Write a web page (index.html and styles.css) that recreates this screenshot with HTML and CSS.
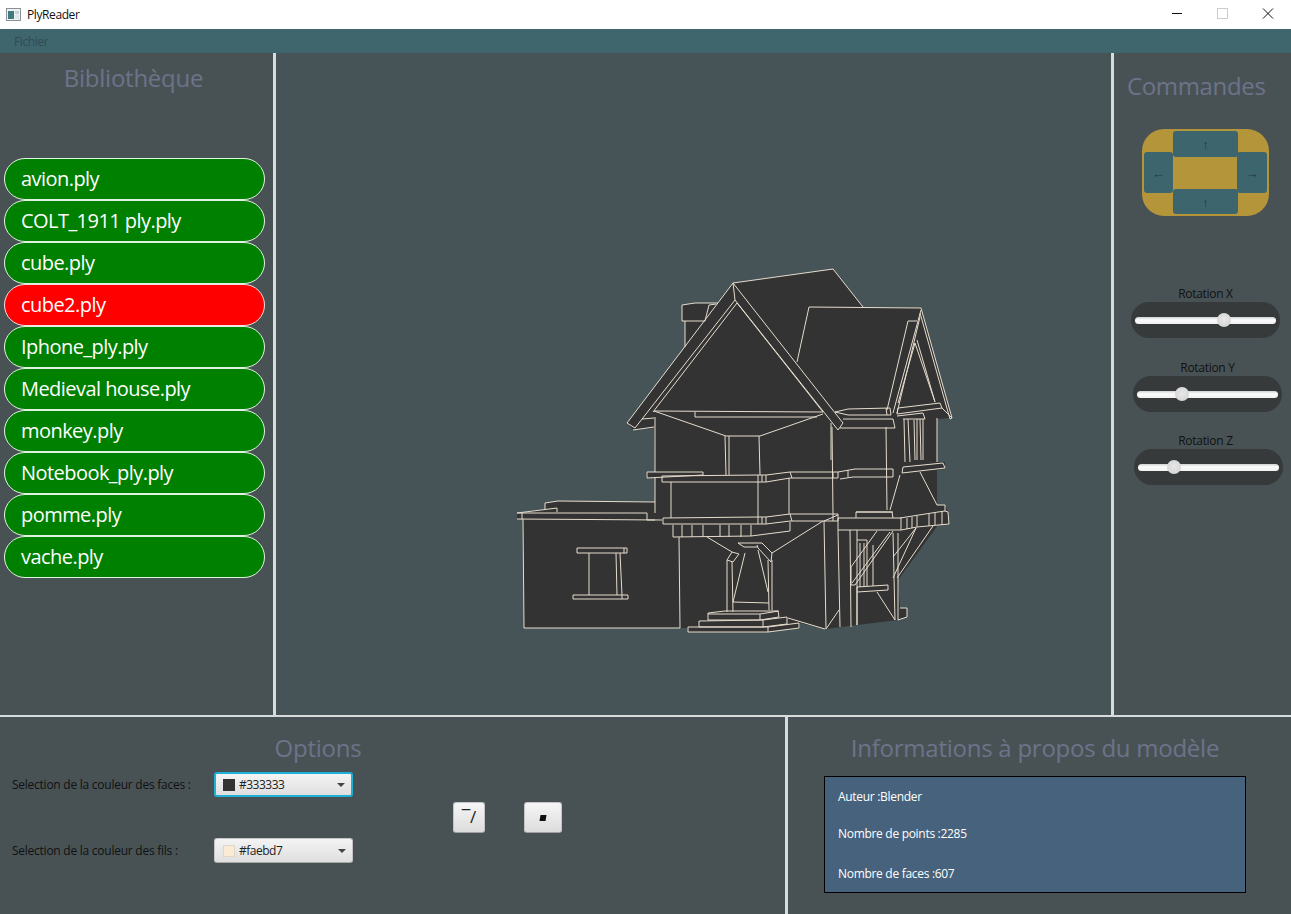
FILE: index.html
```html
<!DOCTYPE html>
<html lang="fr">
<head>
<meta charset="utf-8">
<title>PlyReader</title>
<link rel="stylesheet" href="styles.css">
</head>
<body>
<div class="app">
  <header class="titlebar">
    <svg class="app-icon" width="16" height="14" viewBox="0 0 16 14"><rect x="0.5" y="0.5" width="14" height="12" fill="#eef1f2" stroke="#8b9296"/><rect x="2" y="3" width="6" height="8" fill="#3f7a7e"/><rect x="9" y="3" width="4" height="3" fill="#c9d2d6"/><rect x="9" y="7" width="4" height="4" fill="#dfe5e7"/></svg>
    <span class="app-name">PlyReader</span>
    <div class="win-controls">
      <svg class="win-icon" width="46" height="29" viewBox="0 0 46 29"><path d="M19 13.500h10" stroke="#111" fill="none"/></svg>
      <svg class="win-icon" width="46" height="29" viewBox="0 0 46 29"><rect x="18.500" y="8.500" width="10" height="10" stroke="#ccc" fill="none"/></svg>
      <svg class="win-icon" width="46" height="29" viewBox="0 0 46 29"><path d="M18 8.500l10 10M28 8.500l-10 10" stroke="#111" fill="none"/></svg>
    </div>
  </header>
  <nav class="menubar"><span class="menu-item">Fichier</span></nav>

  <main class="top-row">
    <section class="library">
      <h2 class="panel-title library-title">Bibliothèque</h2>
      <ul class="file-list">
        <li class="file">avion.ply</li>
        <li class="file">COLT_1911 ply.ply</li>
        <li class="file">cube.ply</li>
        <li class="file file-active">cube2.ply</li>
        <li class="file">Iphone_ply.ply</li>
        <li class="file">Medieval house.ply</li>
        <li class="file">monkey.ply</li>
        <li class="file">Notebook_ply.ply</li>
        <li class="file">pomme.ply</li>
        <li class="file">vache.ply</li>
      </ul>
    </section>

    <section class="viewport">
      <svg class="model" width="835" height="662" viewBox="276 53 835 662">
        <path class="mesh-fill" d="M733 283L833 269L863 307L921 308L952 418L937 419L937 462L945 462L945 469L937 470L937 505L945 505L948 512L949 524L938 525L898 580L900 608L907 608L907 617L898 620L857 625L826 629L800 623L800 628L768 632L688 632L687 628L524 628L523 519L517 519L517 513L545 509L545 503L558 501L655 502L655 478L646 478L646 472L655 472L654 428L633 430L627 423L685 347L685 321L682 321L682 305L695 303L718 303Z"/>
        <path class="mesh-line" d="M733 283L833 269L863 307M809 307L921 308L952 418L950 419L920 313M809 307L797 362
        M627 423L733 283L843 423L838 430L735 300L635 428L627 423M733 283L735 300M653 412L737 303L823 412
        M685 347L685 321M682 305L682 321L705 321L709 305M682 305L695 303L718 303M709 305L716 304
        M654 411L823 412M695 412L695 417L817 417M654 411L726 436L760 436L823 414M633 430L654 427M642 419L654 418
        M725 436L726 475M729 436L729 475M759 436L760 475
        M662 476L758 475L766 475L766 482L662 482ZM758 475L758 482M762 475L762 482
        M766 475L790 472L832 472L838 472L838 478L792 478L790 472M766 482L790 478L792 478M833 472L833 478
        M838 472L855 469L893 469L893 477L853 477L840 479
        M647 472L703 472L703 475L647 478ZM655 417L655 472M655 478L655 513
        M671 482L671 518M758 482L758 517M789 478L789 514M832 427L833 514
        M663 518L758 517L766 517L766 524L663 524ZM758 517L758 524M762 517L762 524
        M766 517L790 514L838 514L838 521L792 521L790 514M766 524L790 521L792 521M833 514L833 521
        M790 522L790 531L751 536L673 537L673 525M682 525L682 537M692 525L692 537M703 525L703 537M720 525L720 537M729 525L729 537M741 525L741 537M751 525L751 536
        M679 537L680 628M707 537L732 552M823 521L772 553
        M738 543L762 543L772 553L771 562L758 548L757 545M738 543L744 547L757 547M727 560L732 552L739 554L733 562L727 560
        M727 560L727 612M732 562L733 612M768 560L769 610M772 560L772 610M745 553L733 602M758 550L768 592M733 602L769 603
        M708 613L725 611L778 611L779 617L760 620L708 620ZM708 614L760 614L779 611M760 614L760 620
        M699 621L763 620L787 617L787 624L763 627L699 627ZM763 620L763 627
        M688 627L768 627L799 623L799 628L768 632L688 632ZM768 627L768 632M788 618L825 629
        M824 521L826 629M839 610L826 629M838 530L840 627M850 530L851 627M857 530L857 625
        M838 518L901 518L901 530L838 530ZM856 512L892 512L893 518M856 512L856 518M824 521L838 515
        M900 518L938 512L945 511L948 512L949 524L917 527L901 530M907 518L907 529M912 517L912 528M917 516L917 527M929 514L929 526M935 513L935 525M942 512L942 525
        M851 567L877 531M893 531L855 585L851 585L851 567M852 583L890 532
        M893 578L916 528M933 526L897 578M893 557L916 528
        M857 587L888 585L888 590L857 592ZM857 540L867 540L867 586M860 543L860 587M864 543L864 587M873 545L873 586M877 592L895 620M893 533L895 620M898 533L898 620M857 592L857 625
        M900 608L907 608L907 617L898 620
        M903 467L943 463L945 468L902 473L903 467M900 475L890 510M920 472L937 505M937 505L945 505L945 511
        M904 419L905 462M908 419L910 462M914 420L915 460M917 419L917 460M920 419L921 460M923 419L923 460M937 418L937 462
        M898 408L940 403L942 408L897 414ZM897 416L923 413L925 419L903 419M942 408L952 418
        M887 410L908 321L917 321M893 413L921 310M897 413L920 317M898 403L915 343L935 402L917 340
        M835 412L848 409L890 408L891 415L848 415ZM886 408L887 415M843 419L893 419L895 428L840 428M831 423L831 460M886 427L887 510M856 512L893 512
        M848 470L848 477
        M517 513L647 513M517 519L662 520M523 519L524 628L680 628M517 513L557 508L557 512M545 503L558 501L655 502M545 503L545 509M522 513L522 519M647 513L647 520L655 520
        M577 548L627 548L627 553L577 553ZM624 548L624 553M589 553L589 595M616 553L617 595M620 553L622 595M573 595L628 595L628 599L573 599ZM622 595L622 599"/>
      </svg>
    </section>

    <aside class="commands">
      <h2 class="panel-title commands-title">Commandes</h2>
      <div class="dpad">
        <button class="dpad-btn dpad-up" type="button">↑</button>
        <button class="dpad-btn dpad-left" type="button">←</button>
        <span class="dpad-center"></span>
        <button class="dpad-btn dpad-right" type="button">→</button>
        <button class="dpad-btn dpad-down" type="button">↑</button>
      </div>
      <div class="slider-label label-x">Rotation X</div>
      <div class="slider slider-x"><div class="track"><span class="thumb" style="left:82px"></span></div></div>
      <div class="slider-label label-y">Rotation Y</div>
      <div class="slider slider-y"><div class="track"><span class="thumb" style="left:38px"></span></div></div>
      <div class="slider-label label-z">Rotation Z</div>
      <div class="slider slider-z"><div class="track"><span class="thumb" style="left:29px"></span></div></div>
    </aside>
  </main>

  <footer class="bottom-row">
    <section class="options">
      <h2 class="panel-title options-title">Options</h2>
      <div class="options-body">
        <div class="color-rows">
          <div class="color-row">
            <label class="color-label">Selection de la couleur des faces :</label>
            <div class="combo combo-focus"><span class="swatch swatch-dark"></span><span class="combo-value">#333333</span><span class="caret"></span></div>
          </div>
          <div class="color-row">
            <label class="color-label">Selection de la couleur des fils :</label>
            <div class="combo"><span class="swatch swatch-light"></span><span class="combo-value">#faebd7</span><span class="caret"></span></div>
          </div>
        </div>
        <div class="mode-buttons">
          <button class="mode-btn mode-wire" type="button">‾/</button>
          <button class="mode-btn mode-solid" type="button"><svg width="8" height="6" viewBox="0 0 8 6"><path d="M1.500 0H7.500L6.500 6H0.500Z" fill="#111"/></svg></button>
        </div>
      </div>
    </section>
    <section class="info">
      <h2 class="panel-title info-title">Informations à propos du modèle</h2>
      <div class="info-box">
        <p class="info-line">Auteur :Blender</p>
        <p class="info-line">Nombre de points :2285</p>
        <p class="info-line info-last">Nombre de faces :607</p>
      </div>
    </section>
  </footer>
</div>
</body>
</html>
```

FILE: styles.css
```css
* { box-sizing: border-box; }
html, body { margin: 0; padding: 0; }
body {
  width: 1291px;
  height: 914px;
  overflow: hidden;
  font-family: "Open Sans", "Noto Sans", "Liberation Sans", sans-serif;
  font-size: 12px;
  background: #485255;
}
.app { display: flex; flex-direction: column; width: 1291px; height: 914px; }

.titlebar {
  display: flex;
  align-items: center;
  height: 29px;
  padding-left: 6px;
  background: #fff;
  color: #111;
}
.app-icon { margin-right: 5px; }
.app-name { letter-spacing: -0.4px; }
.win-controls { display: flex; margin-left: auto; }
.win-icon { display: block; }

.menubar {
  display: flex;
  align-items: center;
  height: 24px;
  padding-left: 14px;
  background: #3f666d;
}
.menu-item { color: #2f4c54; letter-spacing: -0.4px; }

.top-row {
  display: flex;
  height: 664px;
  border-bottom: 2px solid #d6dbdb;
}
.panel-title {
  margin: 0;
  font-size: 24px;
  font-weight: 400;
  line-height: 34px;
  color: #6d7389;
  text-align: center;
  letter-spacing: -0.25px;
}

.library {
  width: 276px;
  flex: none;
  padding-top: 8px;
  border-right: 3px solid #d6dbdb;
}
.library-title { padding-right: 6px; }
.file-list { list-style: none; margin: 63px 0 0 4px; padding: 0; }
.file {
  display: flex;
  align-items: center;
  width: 261px;
  height: 42px;
  padding: 0 0 2px 16px;
  font-size: 20px;
  color: #fff;
  background: #008000;
  border: 1px solid #e0f2e0;
  border-radius: 21px;
  letter-spacing: -0.55px;
}
.file-active { background: #ff0000; border-color: #f6dede; }

.viewport { width: 835px; flex: none; background: #465458; }
.model { display: block; }
.mesh-fill { fill: #333333; stroke: none; }
.mesh-line { fill: none; stroke: #e6dccd; stroke-width: 1; stroke-linejoin: round; }

.commands {
  flex: 1;
  padding-top: 16px;
  border-left: 3px solid #d6dbdb;
}
.commands-title { width: 138px; margin-left: 13px; white-space: nowrap; letter-spacing: -0.35px; }
.dpad {
  display: grid;
  grid-template-columns: 29px 65px 29px;
  grid-template-rows: 26px 32px 25px;
  width: 127px;
  height: 87px;
  margin: 26px 0 0 28px;
  padding: 2px 2px;
  background: #b5953a;
  border-radius: 22px;
}
.dpad-btn {
  padding: 0;
  border: 0;
  font: inherit;
  font-size: 13px;
  color: #22393f;
  background: #3d656d;
  border-radius: 3px;
}
.dpad-left { margin: -5px 0 -4px; }
.dpad-right { margin: -5px 0 -4px -1px; }
.dpad-up { grid-column: 2; grid-row: 1; }
.dpad-left { grid-column: 1; grid-row: 2; }
.dpad-center { grid-column: 2; grid-row: 2; }
.dpad-right { grid-column: 3; grid-row: 2; }
.dpad-down { grid-column: 2; grid-row: 3; }

.slider-label { height: 16px; line-height: 16px; text-align: center; color: #111; letter-spacing: -0.3px; }
.label-x { width: 149px; margin: 70px 0 0 17px; }
.label-y { width: 149px; margin: 22px 0 0 19px; }
.label-z { width: 149px; margin: 21px 0 0 17px; }
.slider {
  display: flex;
  align-items: center;
  width: 149px;
  height: 36px;
  padding: 0 4px;
  background: #363a3b;
  border-radius: 18px;
}
.slider-x { margin-left: 17px; }
.slider-y { margin-left: 19px; }
.slider-z { margin-left: 20px; }
.track {
  position: relative;
  width: 141px;
  height: 7px;
  background: linear-gradient(#cfd2d2, #fbfbfb 40%, #f0f0f0);
  border-radius: 4px;
}
.thumb {
  position: absolute;
  top: -3.500px;
  width: 14px;
  height: 14px;
  background: radial-gradient(circle at 50% 45%, #e8e8e8, #cfcfcf);
  border-radius: 50%;
}

.bottom-row { display: flex; flex: 1; }
.options { width: 785px; flex: none; }
.options-title { width: 636px; padding-top: 14px; height: 48px; }
.options-body { display: flex; align-items: center; margin-top: 7px; padding-left: 12px; }
.color-rows { display: flex; flex-direction: column; gap: 41px; }
.color-row { display: flex; align-items: center; height: 25px; }
.color-label { width: 202px; color: #111; letter-spacing: -0.25px; }
.combo {
  display: flex;
  align-items: center;
  width: 139px;
  height: 25px;
  padding-left: 8px;
  background: linear-gradient(#f4f4f4, #dfdfdf);
  border: 1px solid #c4c4c4;
  border-bottom-color: #a8a8a8;
  border-radius: 3px;
  color: #222;
}
.combo-focus { border: 2px solid #1fb0d8; padding-left: 7px; }
.swatch { width: 12px; height: 12px; margin-right: 4px; }
.swatch-dark { background: #333; }
.swatch-light { background: #faebd7; border: 1px solid #e4d6c5; }
.combo-value { letter-spacing: -0.5px; }
.caret {
  margin-left: auto;
  margin-right: 6px;
  border-left: 4.500px solid transparent;
  border-right: 4.500px solid transparent;
  border-top: 4.500px solid #444;
}
.mode-buttons { display: flex; gap: 39px; margin-left: 100px; }
.mode-btn {
  display: flex;
  align-items: center;
  justify-content: center;
  height: 31px;
  padding: 0;
  font: inherit;
  font-size: 17px;
  color: #222;
  background: linear-gradient(#f6f6f6, #dcdcdc);
  border: 1px solid #c4c4c4;
  border-bottom-color: #a0a0a0;
  border-radius: 3px;
}
.mode-wire { width: 32px; padding-bottom: 3px; }
.mode-solid { width: 38px; }

.info { flex: 1; border-left: 3px solid #d6dbdb; }
.info-title { padding-top: 14px; padding-right: 9px; height: 48px; white-space: nowrap; }
.info-box {
  width: 422px;
  height: 117px;
  margin: 11px 0 0 36px;
  padding: 12px 13px 0;
  background: #46627c;
  border: 1px solid #000;
}
.info-line { margin: 0 0 21px; line-height: 16px; color: #fff; letter-spacing: -0.3px; }
.info-line:nth-child(2) { margin-bottom: 24px; }
.info-last { margin-bottom: 0; }
```
